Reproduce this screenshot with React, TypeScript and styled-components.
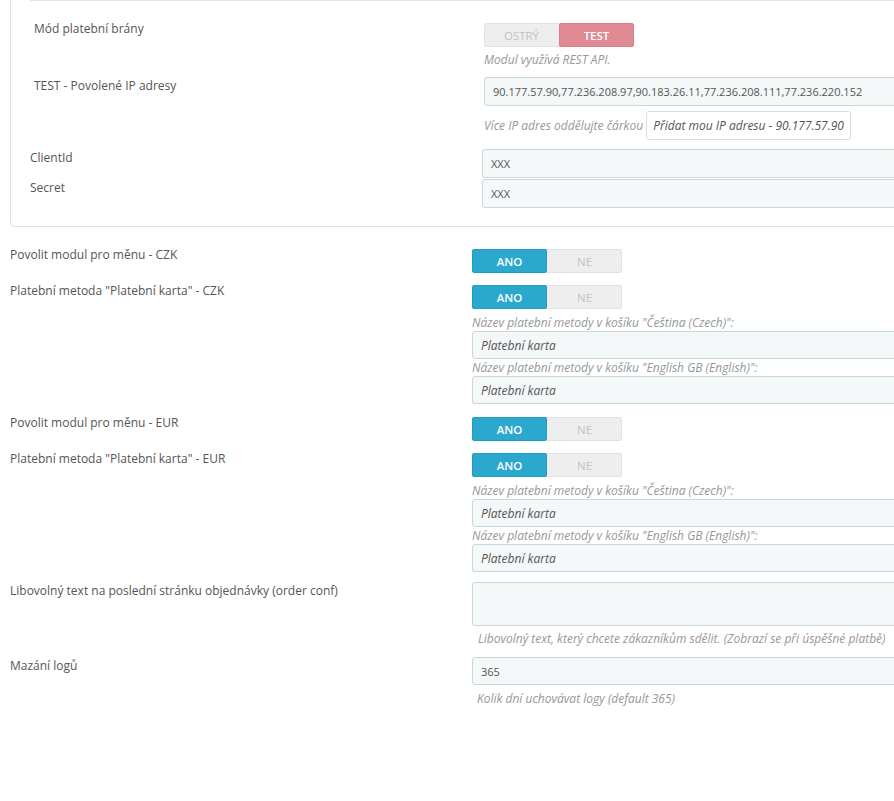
import React from 'react';
import styled, { createGlobalStyle } from 'styled-components';

const Global = createGlobalStyle`
  html, body { margin: 0; padding: 0; overflow: hidden; background: #fff; }
  body { font-family: "Open Sans", "Liberation Sans", sans-serif; font-size: 12px; color: #555; }
  * { box-sizing: border-box; }
`;

const Page = styled.div`
  width: 1200px;
  min-height: 801px;
  padding-left: 10px;
`;

const Panel = styled.div`
  border: 1px solid #dcdfe3;
  border-top: none;
  border-radius: 0 0 5px 5px;
  padding-bottom: 18px;
  margin-bottom: 19px;
`;

const TopRule = styled.div`
  height: 1px;
  margin-left: 19px;
  background: #e3e6ea;
  margin-bottom: 19px;
`;

const Row = styled.div<{ $labelW: number; $indent?: number; $mb?: number }>`
  display: grid;
  grid-template-columns: ${(p) => p.$labelW}px 1fr;
  padding-left: ${(p) => p.$indent ?? 0}px;
  margin-bottom: ${(p) => p.$mb ?? 0}px;
`;

const Label = styled.div`
  line-height: 18px;
  font-size: 12px;
  color: #555;
`;

const Control = styled.div<{ $pt?: number }>`
  display: flex;
  flex-direction: column;
  align-items: stretch;
  padding-top: ${(p) => p.$pt ?? 0}px;
`;

const Toggle = styled.div`
  display: flex;
  width: 150px;
  height: 24px;
  border-radius: 3px;
  background: #eeeeee;
  box-shadow: inset 0 0 0 1px #e2e2e2;
`;

const ToggleOption = styled.span<{ $on: boolean; $tone: 'blue' | 'red' }>`
  flex: 1;
  display: flex;
  align-items: center;
  justify-content: center;
  font-size: 11.5px;
  text-transform: uppercase;
  border-radius: 3px;
  font-weight: ${(p) => (p.$on ? 600 : 400)};
  color: ${(p) => (p.$on ? '#fff' : '#c2c2c2')};
  background: ${(p) => (p.$on ? (p.$tone === 'blue' ? '#2aa8cd' : '#e08b94') : 'transparent')};
  box-shadow: ${(p) => (p.$on ? (p.$tone === 'blue' ? 'inset 0 0 0 1px #249cc0' : 'inset 0 0 0 1px #d47f89') : 'none')};
`;

const Help = styled.div<{ $mt?: number; $pl?: number }>`
  font-style: italic;
  font-size: 12px;
  line-height: 18px;
  color: #979797;
  margin-top: ${(p) => p.$mt ?? 0}px;
  padding-left: ${(p) => p.$pl ?? 0}px;
`;

const LangLabel = styled.div<{ $mt?: number }>`
  font-style: italic;
  font-size: 12px;
  line-height: 17px;
  color: #979797;
  margin-top: ${(p) => p.$mt ?? 0}px;
`;

const Input = styled.input<{ $h?: number; $size?: number; $italic?: boolean }>`
  display: block;
  width: 100%;
  height: ${(p) => p.$h ?? 28}px;
  margin: 0;
  padding: 0 8px;
  background: #f5f8f9;
  border: 1px solid #c9d6db;
  border-radius: 3px;
  font-family: "Open Sans", "Liberation Sans", sans-serif;
  font-size: ${(p) => p.$size ?? 12}px;
  font-style: ${(p) => (p.$italic ? 'italic' : 'normal')};
  color: #555;
  outline: none;
`;

const TextArea = styled.textarea`
  display: block;
  width: 100%;
  height: 44px;
  margin: 0;
  padding: 6px 8px;
  background: #f5f8f9;
  border: 1px solid #c9d6db;
  border-radius: 3px;
  font-family: "Open Sans", "Liberation Sans", sans-serif;
  font-size: 12px;
  color: #555;
  resize: none;
  outline: none;
`;

const HelpLine = styled.div`
  display: flex;
  align-items: center;
  gap: 3px;
  margin-top: 5px;
`;

const Button = styled.button`
  height: 29px;
  padding: 0 6px;
  background: #fff;
  border: 1px solid #dcdcdc;
  border-radius: 3px;
  font-family: "Open Sans", "Liberation Sans", sans-serif;
  font-size: 12px;
  font-style: italic;
  color: #555;
  cursor: pointer;
`;

const Stack = styled.div<{ $gap?: number }>`
  display: flex;
  flex-direction: column;
  gap: ${(p) => p.$gap ?? 0}px;
`;

type ToggleProps = { left: string; right: string; on: 'left' | 'right'; tone: 'blue' | 'red' };
const Switch = ({ left, right, on, tone }: ToggleProps) => (
  <Toggle>
    <ToggleOption $on={on === 'left'} $tone={tone}>{left}</ToggleOption>
    <ToggleOption $on={on === 'right'} $tone={tone}>{right}</ToggleOption>
  </Toggle>
);

const CartNames = () => (
  <>
    <LangLabel $mt={5}>Název platební metody v košíku "Čeština (Czech)":</LangLabel>
    <Input $italic readOnly defaultValue="Platební karta" />
    <LangLabel>Název platební metody v košíku "English GB (English)":</LangLabel>
    <Input $italic readOnly defaultValue="Platební karta" />
  </>
);

export default function App() {
  return (
    <>
      <Global />
      <Page>
        <Panel>
          <TopRule />
          <Row $labelW={450} $indent={23} $mb={8}>
            <Label>Mód platební brány</Label>
            <Control $pt={3}>
              <Switch left="Ostrý" right="Test" on="right" tone="red" />
              <Help $mt={4}>Modul využívá REST API.</Help>
            </Control>
          </Row>
          <Row $labelW={450} $indent={23} $mb={9}>
            <Label>TEST - Povolené IP adresy</Label>
            <Control>
              <Input
                $h={29}
                $size={11}
                readOnly
                defaultValue="90.177.57.90,77.236.208.97,90.183.26.11,77.236.208.111,77.236.220.152"
              />
              <HelpLine>
                <Help>Více IP adres oddělujte čárkou</Help>
                <Button type="button">Přidat mou IP adresu - 90.177.57.90</Button>
              </HelpLine>
            </Control>
          </Row>
          <Stack $gap={1}>
            <Row $labelW={452} $indent={19}>
              <Label>ClientId</Label>
              <Control>
                <Input $h={29} $size={11} readOnly defaultValue="XXX" />
              </Control>
            </Row>
            <Row $labelW={452} $indent={19}>
              <Label>Secret</Label>
              <Control>
                <Input $h={29} $size={11} readOnly defaultValue="XXX" />
              </Control>
            </Row>
          </Stack>
        </Panel>

        <Row $labelW={462} $mb={9}>
          <Label>Povolit modul pro měnu - CZK</Label>
          <Control $pt={3}>
            <Switch left="Ano" right="Ne" on="left" tone="blue" />
          </Control>
        </Row>
        <Row $labelW={462} $mb={10}>
          <Label>Platební metoda "Platební karta" - CZK</Label>
          <Control $pt={3}>
            <Switch left="Ano" right="Ne" on="left" tone="blue" />
            <CartNames />
          </Control>
        </Row>
        <Row $labelW={462} $mb={9}>
          <Label>Povolit modul pro měnu - EUR</Label>
          <Control $pt={3}>
            <Switch left="Ano" right="Ne" on="left" tone="blue" />
          </Control>
        </Row>
        <Row $labelW={462} $mb={10}>
          <Label>Platební metoda "Platební karta" - EUR</Label>
          <Control $pt={3}>
            <Switch left="Ano" right="Ne" on="left" tone="blue" />
            <CartNames />
          </Control>
        </Row>
        <Row $labelW={462} $mb={9}>
          <Label>Libovolný text na poslední stránku objednávky (order conf)</Label>
          <Control>
            <TextArea readOnly defaultValue="" />
            <Help $mt={4} $pl={6}>
              Libovolný text, který chcete zákazníkům sdělit. (Zobrazí se při úspěšné platbě)
            </Help>
          </Control>
        </Row>
        <Row $labelW={462}>
          <Label>Mazání logů</Label>
          <Control>
            <Input $size={11} readOnly defaultValue="365" />
            <Help $mt={5} $pl={5}>Kolik dní uchovávat logy (default 365)</Help>
          </Control>
        </Row>
      </Page>
    </>
  );
}
